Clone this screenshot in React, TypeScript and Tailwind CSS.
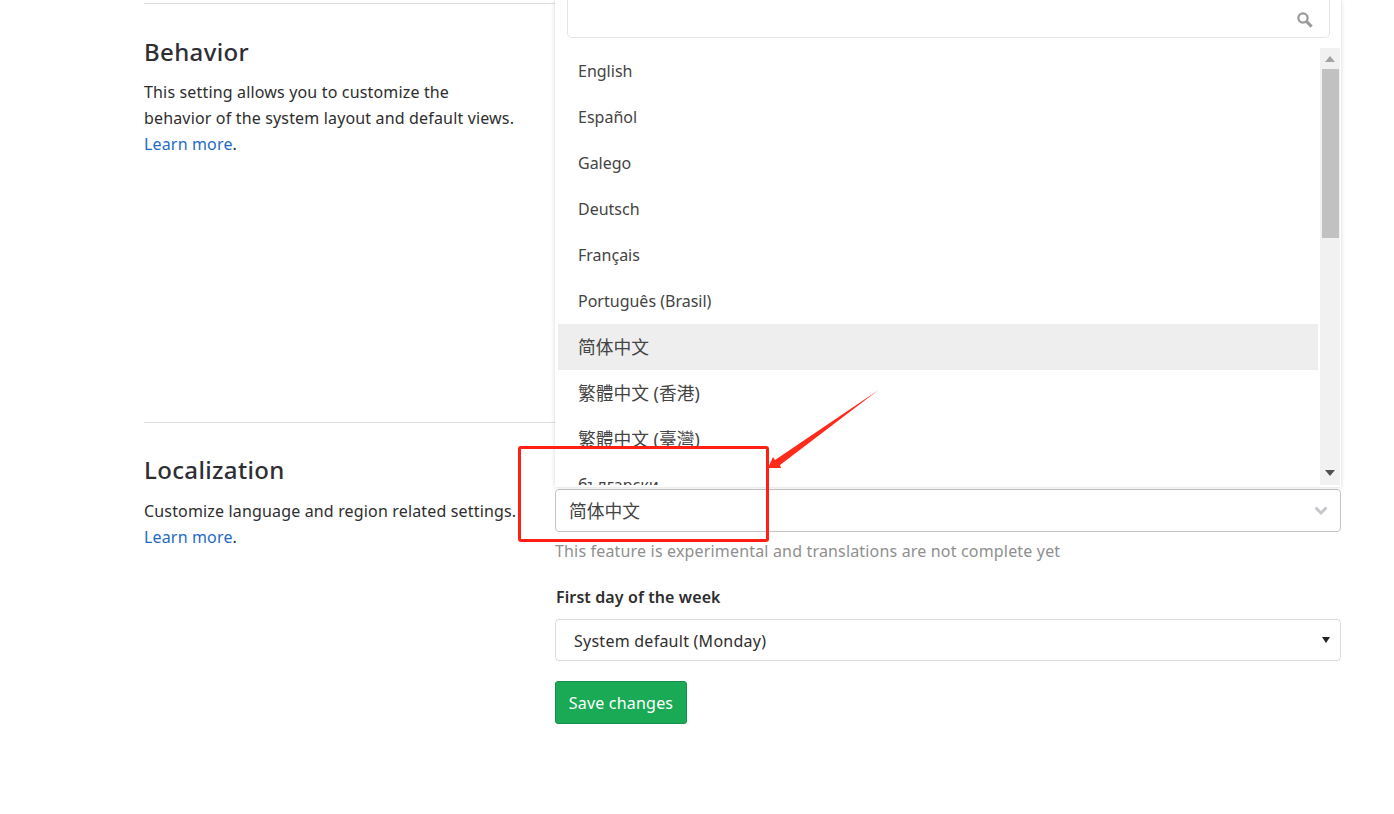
const font = '[font-family:"Noto_Sans","Noto_Sans_CJK_SC",sans-serif]';
const items = ["English","Español","Galego","Deutsch","Français","Português (Brasil)","简体中文","繁體中文 (香港)","繁體中文 (臺灣)","български"];

function Section({ title, children, right, tight }: { title: string; children: React.ReactNode; right?: React.ReactNode; tight?: boolean }) {
  return (
    <section className="flex border-t border-[#dedede]">
      <div className={`w-[411px] shrink-0 ${tight ? "pt-[27px]" : "pt-[28px]"}`}>
        <h4 className="text-[24px] leading-[40px] font-medium text-[#2e2e33] tracking-[0.35px]">{title}</h4>
        <p className={`${tight ? "mt-[8px]" : "mt-[7px]"} text-[16px] leading-[26px] text-[#2e2e2e] tracking-[0.16px] whitespace-nowrap`}>{children}</p>
      </div>
      <div className="flex-1 relative">{right}</div>
    </section>
  );
}

function Dropdown() {
  return (
    <div className="absolute left-0 right-0 bottom-full mb-[2px] h-[487px] bg-white shadow-[0_0_4px_rgba(0,0,0,0.18)] overflow-hidden flex flex-col">
      <div className="ml-[12px] mr-[11px] h-[38px] shrink-0 border border-t-0 border-[#e5e5e5] rounded-b-[5px] flex items-center justify-end pr-[16px]">
        <svg width="16" height="16" viewBox="0 0 16 16" className="mt-[2px]" fill="none" stroke="#9a9a9a">
          <circle cx="6" cy="6" r="4.6" strokeWidth="2.3" />
          <path d="M9.6 9.6 L14.6 14.6" strokeWidth="3" />
        </svg>
      </div>
      <div className="mt-[10px] h-[437px] flex pl-[3px] pr-px overflow-hidden">
        <ul className="flex-1">
          {items.map((t, i) => (
            <li key={t} className={`h-[46px] pl-[20px] flex items-center text-[#444] ${i === 6 || i === 7 || i === 8 ? "text-[17.75px]" : "text-[16px]"} ${i === 6 ? "bg-[#eeeeee]" : ""}`}>{t}</li>
          ))}
        </ul>
        <div className="w-[20px] ml-[2px] bg-[#f1f1f1] flex flex-col items-center shrink-0">
          <svg width="10" height="6" viewBox="0 0 10 6" className="mt-[8px] mb-[7px]"><path d="M5 0 L10 6 H0 Z" fill="#a3a3a3" /></svg>
          <div className="w-[17px] h-[169px] bg-[#c1c1c1]" />
          <div className="flex-1" />
          <svg width="10" height="6" viewBox="0 0 10 6" className="mb-[9px]"><path d="M0 0 H10 L5 6 Z" fill="#505050" /></svg>
        </div>
      </div>
    </div>
  );
}

export default function App() {
  return (
    <div className={`${font} relative h-[814px] bg-white overflow-hidden`}>
      <div className="ml-[144px] w-[1197px] pt-[3px]">
        <Section title="Behavior" right={<div className="h-[418px]" />}>
          This setting allows you to customize the<br />behavior of the system layout and default views.<br />
          <a className="text-[#1f6bc4]">Learn more</a>.
        </Section>
        <Section
          tight
          title="Localization"
          right={
            <div className="pt-[66px]">
              <div className="relative">
                <Dropdown />
                <div className="h-[43px] border border-[#c4c4c4] rounded-[4px] flex items-center justify-between pl-[13px] pr-[12px] text-[17.75px] text-[#444]">
                  <span className="translate-y-px">简体中文</span>
                  <svg width="14" height="9" viewBox="0 0 14 9" fill="none"><path d="M1.5 1.5 L7 7 L12.5 1.5" stroke="#c4c6ca" strokeWidth="2.8" /></svg>
                </div>
              </div>
              <p className="mt-[6px] text-[16px] leading-[26px] tracking-[0.17px] text-[#8f8f8f]">This feature is experimental and translations are not complete yet</p>
              <label className="block mt-[20px] pl-px text-[16px] leading-[26px] font-semibold tracking-[0.1px] text-[#2e2e2e]">First day of the week</label>
              <div className="mt-[9px] h-[42px] border border-[#dcdcdc] rounded-[4px] flex items-center justify-between pl-[18px] pr-[10px] text-[16px] tracking-[0.25px] text-[#2e2e2e]">
                <span className="translate-y-px">System default (Monday)</span>
                <svg width="8" height="6" viewBox="0 0 8 6"><path d="M0 0 H8 L4 6 Z" fill="#222" /></svg>
              </div>
              <button className="mt-[20px] block h-[43px] w-[132px] pt-px rounded-[3px] border border-[#168f4b] bg-[#1aaa55] text-white text-[16px] tracking-[0.2px]">Save changes</button>
            </div>
          }
        >
          Customize language and region related settings.<br />
          <a className="text-[#1f6bc4]">Learn more</a>.
        </Section>
      </div>
      <div className="absolute left-[518px] top-[446px] w-[251px] h-[96px] border-[3px] border-[#ff1f14] rounded-[3px]" />
      <svg className="absolute left-[760px] top-[385px]" width="125" height="90" viewBox="0 0 125 90">
        <path d="M118.5 5 L15 75 L13 72 L8 83 L21 83 L20 80 Z" fill="#ff2a1a" />
      </svg>
    </div>
  );
}
